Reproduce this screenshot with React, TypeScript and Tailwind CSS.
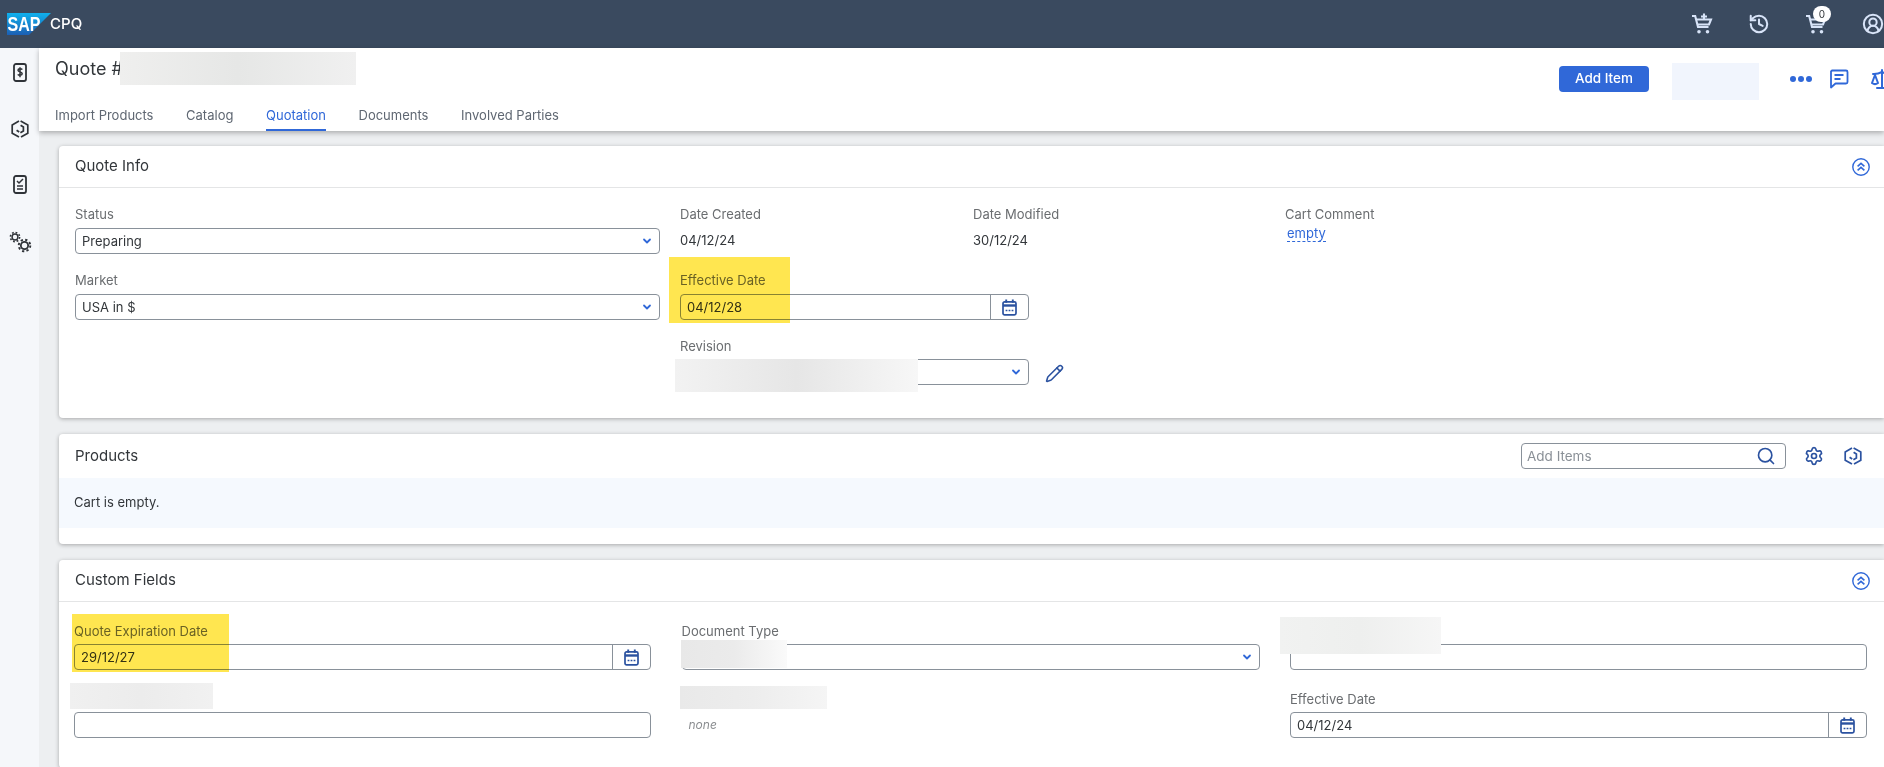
import type { ReactNode } from 'react'
import { ChevronDown, CircleUserRound, History, Pencil, Scale, Search, Settings } from 'lucide-react'

const tabs = ['Import Products', 'Catalog', 'Quotation', 'Documents', 'Involved Parties']

function SapLogo() {
  return (
    <svg width="44" height="22" viewBox="0 0 44 22" className="block">
      <defs>
        <linearGradient id="sapFlag" x1="0" y1="0" x2="0" y2="1">
          <stop offset="0" stopColor="#0fb1ee" />
          <stop offset="1" stopColor="#1c5fb4" />
        </linearGradient>
      </defs>
      <polygon points="0,0 44,0 22,22 0,22" fill="url(#sapFlag)" />
      <text x="0.5" y="18" fontFamily="'Liberation Sans', sans-serif" fontSize="20" fontWeight="700" fill="#fff" textLength="33" lengthAdjust="spacingAndGlyphs">
        SAP
      </text>
    </svg>
  )
}

function CartIcon({ plus = false }: { plus?: boolean }) {
  return (
    <svg width="22" height="22" viewBox="0 0 22 22" fill="none" stroke="#d8e4f8" strokeWidth="2.1">
      <path d="M1 3h3.2l2.8 11h10.5" />
      <path d="M5 6.5h15l-2 5H6.4" />
      <circle cx="8" cy="18.8" r="1.8" fill="#d8e4f8" stroke="none" />
      <circle cx="16.5" cy="18.8" r="1.8" fill="#d8e4f8" stroke="none" />
      {plus && <path d="M13 0.5v6M10 3.5h6" />}
    </svg>
  )
}

function Badge() {
  return (
    <span className="absolute left-[8px] top-[-7px] flex h-[16px] w-[18px] items-center justify-center rounded-full bg-white text-[10px] text-[#32363a]">
      0
    </span>
  )
}

function DollarDoc() {
  return (
    <svg width="14" height="19" viewBox="0 0 14 19" fill="none" stroke="#2f3338" strokeWidth="1.8">
      <rect x="1" y="1" width="12" height="17" rx="2" />
      <path d="M9.2 6.6C8.8 5.6 5 5.3 5 7.3c0 2 4.2 1.3 4.2 3.5 0 2-3.8 1.7-4.4.6M7 4.2v10" strokeWidth="1.5" />
    </svg>
  )
}

function ProductHex({ color = '#2f3338', size = 18 }: { color?: string; size?: number }) {
  return (
    <svg width={size} height={size} viewBox="0 0 18 18" fill="none" stroke={color} strokeWidth="1.7">
      <path d="M9.6 1 16.8 5v8.2L10 17" />
      <path d="M8 17 1.2 13.2V5L8 1" />
      <path d="M9.6 5.2 12.4 7v4l-3 1.8" />
      <path d="M5.6 10.2 8.2 12" />
    </svg>
  )
}

function ChecklistDoc() {
  return (
    <svg width="14" height="19" viewBox="0 0 14 19" fill="none" stroke="#2f3338" strokeWidth="1.8">
      <rect x="1" y="1" width="12" height="17" rx="2" />
      <path d="m4 6 2 2 4-4M4 11h6M4 14h6" strokeWidth="1.5" />
    </svg>
  )
}

function SmallGear({ size }: { size: number }) {
  return (
    <svg width={size} height={size} viewBox="0 0 14 14" fill="none" stroke="#2f3338">
      <circle cx="7" cy="7" r="3.4" strokeWidth="1.7" />
      <circle cx="7" cy="7" r="5.4" strokeWidth="1.8" strokeDasharray="2.1 2.14" />
    </svg>
  )
}

function CalendarIcon() {
  return (
    <svg width="15" height="17" viewBox="0 0 15 17" fill="none" stroke="#2b52a0" strokeWidth="1.7">
      <rect x="1" y="2.8" width="13" height="13" rx="1.6" />
      <path d="M1 6.5h13" strokeWidth="2.4" />
      <path d="M4.2 0.4v3.4M10.8 0.4v3.4" strokeWidth="1.9" />
      <path d="M3.6 11.5h1.8M6.6 11.5h1.8M9.6 11.5h1.8" strokeWidth="1.7" />
    </svg>
  )
}

function CollapseIcon() {
  return (
    <svg width="18" height="18" viewBox="0 0 18 18" fill="none" stroke="#3068d8" strokeWidth="1.4">
      <circle cx="9" cy="9" r="8.2" />
      <path d="m5.6 8.4 3.4-3 3.4 3M5.6 12.4l3.4-3 3.4 3" strokeWidth="1.6" />
    </svg>
  )
}

function ChatIcon() {
  return (
    <svg width="20" height="20" viewBox="0 0 20 20" fill="none" stroke="#3068d8" strokeWidth="1.8">
      <path d="M3 1.5h14a1.5 1.5 0 0 1 1.5 1.5v10a1.5 1.5 0 0 1-1.5 1.5H6.5L2 18.5V2.5z" strokeLinejoin="round" />
      <path d="M5.5 6h9M5.5 10h6" />
    </svg>
  )
}

function Label({ children }: { children: ReactNode }) {
  return <div className="flex h-[20px] items-center whitespace-nowrap text-[13px] leading-none text-[#6a6d70]">{children}</div>
}

function Box({ children, select, date }: { children?: ReactNode; select?: boolean; date?: boolean }) {
  return (
    <div className="flex h-[26px] items-center rounded-[4px] border border-[#89919a] bg-white text-[13px] text-[#32363a]">
      <span className="flex-1 truncate pl-[6px] pt-[2px]">{children}</span>
      {select && <ChevronDown size={12} strokeWidth={3.6} color="#3068d8" className="mr-[6px]" />}
      {date && (
        <span className="flex h-full w-[38px] items-center justify-center border-l border-[#89919a]">
          <CalendarIcon />
        </span>
      )}
    </div>
  )
}

function Field({ label, children, select, date, gap = 'mb-[4px]' }: { label?: string; children?: ReactNode; select?: boolean; date?: boolean; gap?: string }) {
  return (
    <div>
      <div className={gap}>
        <Label>{label}</Label>
      </div>
      <Box select={select} date={date}>
        {children}
      </Box>
    </div>
  )
}

function Card({ title, children, right }: { title: string; children?: ReactNode; right?: ReactNode }) {
  return (
    <section className="rounded-l-[4px] bg-white shadow-[0_1px_4px_rgba(0,0,0,0.3)]">
      <header className="flex h-[41px] items-center justify-between pl-[16px] pr-[14px] text-[15px] text-[#32363a]">
        {title}
        {right}
      </header>
      {children}
    </section>
  )
}

export default function App() {
  return (
    <div className="relative flex h-[767px] w-full flex-col overflow-hidden bg-[#edeff1] font-['Inter',sans-serif]">
      <div className="flex h-[48px] shrink-0 items-center bg-[#3a4a5f] pl-[7px]">
        <SapLogo />
        <span className="ml-[-1px] text-[15px] font-medium text-white">CPQ</span>
        <div className="ml-auto flex items-center">
          <CartIcon plus />
          <History size={22} color="#d8e4f8" strokeWidth={2.2} className="ml-[35px]" />
          <div className="relative ml-[35px] flex">
            <CartIcon />
            <Badge />
          </div>
          <CircleUserRound size={22} color="#d8e4f8" strokeWidth={2.2} className="ml-[35px]" />
        </div>
      </div>

      <div className="flex min-h-0 flex-1">
        <aside className="flex w-[39px] shrink-0 flex-col items-center bg-[#f5f7fa] pt-[15px]">
          <DollarDoc />
          <div className="mt-[38px]">
            <ProductHex />
          </div>
          <div className="mt-[37px]">
            <ChecklistDoc />
          </div>
          <div className="relative mt-[37px] h-[22px] w-[22px]">
            <div className="absolute left-[0px] top-[0px]">
              <SmallGear size={12} />
            </div>
            <div className="absolute left-[8px] top-[7px]">
              <SmallGear size={15} />
            </div>
          </div>
        </aside>

        <main className="flex min-w-0 flex-1 flex-col">
          <div className="relative flex h-[83px] shrink-0 flex-col bg-white pl-[16px] shadow-[0_2px_5px_rgba(0,0,0,0.28)]">
            <div className="flex h-[40px] items-center justify-between pt-[1px]">
              <span className="text-[18px] text-[#32363a]">Quote #</span>
              <div className="flex items-center pt-[20px]">
                <button className="h-[26px] w-[90px] rounded-[4px] bg-[#3068d8] text-[13.5px] font-medium text-white">Add Item</button>
                <div className="ml-[23px] mt-[5px] h-[37px] w-[87px] bg-[#f1f5fd]" />
                <div className="ml-[31px] flex gap-[2px]">
                  <span className="h-[6px] w-[6px] rounded-full bg-[#3068d8]" />
                  <span className="h-[6px] w-[6px] rounded-full bg-[#3068d8]" />
                  <span className="h-[6px] w-[6px] rounded-full bg-[#3068d8]" />
                </div>
                <div className="ml-[17px]">
                  <ChatIcon />
                </div>
                <Scale size={24} color="#3068d8" strokeWidth={2} className="ml-[21px] mr-[-10px]" />
              </div>
            </div>
            <nav className="mt-[15px] flex h-[28px] gap-[32.6px] text-[13px] text-[#5f6772]">
              {tabs.map((tab) => (
                <span
                  key={tab}
                  className={
                    tab === 'Quotation'
                      ? 'flex h-full items-center border-b-2 border-[#3068d8] text-[#3068d8]'
                      : 'flex h-full items-center pb-[2px]'
                  }
                >
                  {tab}
                </span>
              ))}
            </nav>
          </div>

          <div className="flex flex-col gap-[16px] pl-[20px] pt-[15px]">
            <Card title="Quote Info" right={<CollapseIcon />}>
              <div className="flex border-t border-[#e4e5e6] pb-[33px] pl-[16px] pt-[16px]">
                <div className="flex w-[585px] flex-col gap-[16px]">
                  <Field label="Status" select>
                    Preparing
                  </Field>
                  <Field label="Market" select>
                    USA in $
                  </Field>
                </div>
                <div className="ml-[20px] flex w-[349px] flex-col gap-[16px]">
                  <div className="flex">
                    <div className="w-[293px] shrink-0">
                      <Label>Date Created</Label>
                      <div className="mt-[4px] flex h-[26px] items-center text-[13px] text-[#32363a]">04/12/24</div>
                    </div>
                    <div className="shrink-0">
                      <Label>Date Modified</Label>
                      <div className="mt-[4px] flex h-[26px] items-center whitespace-nowrap text-[13px] text-[#32363a]">30/12/24</div>
                    </div>
                  </div>
                  <Field label="Effective Date" date>
                    04/12/28
                  </Field>
                  <div className="relative">
                    <Field label="Revision" select gap="mb-[3px]" />
                    <Pencil size={19} color="#2b52a0" strokeWidth={2} className="absolute left-[365px] top-[28px]" />
                  </div>
                </div>
                <div className="ml-[256px]">
                  <Label>Cart Comment</Label>
                  <span className="ml-[2px] mt-[2px] block w-fit border-b border-dashed border-[#3068d8] text-[13px] leading-[15px] text-[#3068d8]">empty</span>
                </div>
              </div>
            </Card>

            <section className="rounded-l-[4px] bg-white shadow-[0_1px_4px_rgba(0,0,0,0.3)]">
              <header className="flex h-[44px] items-center pl-[16px] text-[15px] text-[#32363a]">
                Products
                <div className="ml-auto flex h-[26px] w-[265px] items-center rounded-[4px] border border-[#89919a] pl-[5px] pr-[9px] text-[13.5px] text-[#8a9097]">
                  <span className="flex-1">Add Items</span>
                  <Search size={20} color="#2b52a0" strokeWidth={2} />
                </div>
                <Settings size={20} color="#2b52a0" strokeWidth={2} className="ml-[18px]" />
                <div className="ml-[20px] mr-[22px]">
                  <ProductHex color="#2b52a0" />
                </div>
              </header>
              <div className="flex h-[50px] items-center bg-[#f5f9fe] pl-[15px] text-[13px] text-[#32363a]">Cart is empty.</div>
              <div className="h-[16px]" />
            </section>

            <Card title="Custom Fields" right={<CollapseIcon />}>
              <div className="grid grid-cols-[577px_1fr_577px] gap-x-[30.5px] gap-y-[19px] border-t border-[#e4e5e6] pb-[30px] pl-[15px] pr-[17px] pt-[19px]">
                <Field label="Quote Expiration Date" date gap="mb-[3px]">
                  29/12/27
                </Field>
                <Field label="Document Type" select gap="mb-[3px]" />
                <Field gap="mb-[3px]" />
                <Field gap="mb-[3px]" />
                <div>
                  <div className="h-[23px]" />
                  <div className="flex h-[26px] items-center pl-[7px] text-[12px] italic text-[#8a8d90]">none</div>
                </div>
                <Field label="Effective Date" date gap="mb-[3px]">
                  04/12/24
                </Field>
              </div>
            </Card>
          </div>
        </main>
      </div>

      {/* redaction patches and marker highlights laid over the form */}
      <div className="absolute left-[120px] top-[52px] h-[33px] w-[236px] bg-linear-to-r from-[#efefee] via-[#e6e7e6] to-[#f0f0f0]" />
      <div className="absolute left-[675px] top-[359px] h-[33px] w-[243px] bg-linear-to-r from-[#f2f2f2] via-[#e6e6e6] to-[#f7f7f7]" />
      <div className="absolute left-[681px] top-[640px] h-[28px] w-[106px] bg-linear-to-r from-[#e8e8e8] via-[#ebebeb] to-[#fafafa]" />
      <div className="absolute left-[680px] top-[686px] h-[23px] w-[147px] bg-linear-to-r from-[#e9e9e9] via-[#ededed] to-[#f5f5f5]" />
      <div className="absolute left-[70px] top-[683px] h-[26px] w-[143px] bg-linear-to-r from-[#f0f0f0] via-[#ececec] to-[#f1f1f1]" />
      <div className="absolute left-[1280px] top-[617px] h-[37px] w-[161px] bg-linear-to-r from-[#f1f2f1] via-[#eeefee] to-[#f6f6f6]" />
      <div className="absolute left-[669px] top-[257px] h-[66px] w-[121px] bg-[#ffe650] mix-blend-multiply" />
      <div className="absolute left-[72px] top-[614px] h-[58px] w-[157px] bg-[#ffe650] mix-blend-multiply" />
    </div>
  )
}
